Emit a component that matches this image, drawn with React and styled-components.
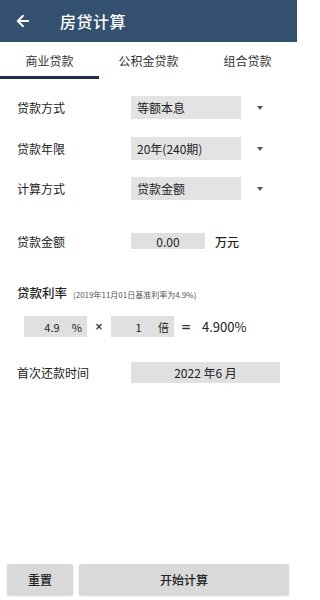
import React from "react";
import styled, { createGlobalStyle } from "styled-components";

const Global = createGlobalStyle`
  html, body { margin: 0; padding: 0; background: #fff; }
  body { font-family: "Noto Sans CJK SC", "Noto Sans", sans-serif; color: #222; }
  * { box-sizing: border-box; }
`;

const Page = styled.div`
  width: 297px;
  height: 600px;
  display: flex;
  flex-direction: column;
  background: #fff;
`;

const Header = styled.div`
  height: 42px;
  background: #34506f;
  display: flex;
  align-items: center;
  padding-left: 14px;
  color: #fff;
`;

const BackIcon = styled.svg`
  width: 18px;
  height: 18px;
  flex: none;
`;

const Title = styled.div`
  margin-left: 28px;
  font-size: 16px;
  font-weight: 500;
  letter-spacing: 0.5px;
`;

const Tabs = styled.div`
  height: 38px;
  display: grid;
  grid-template-columns: repeat(3, 1fr);
`;

const Tab = styled.div`
  display: flex;
  align-items: center;
  justify-content: center;
  font-size: 12px;
  color: #333;
  position: relative;
  padding-bottom: 2px;
  &::after {
    content: "";
    display: ${(p) => (p.$active ? "block" : "none")};
    position: absolute;
    left: 0;
    right: 0;
    bottom: 1px;
    height: 3px;
    background: #1f2b48;
  }
`;

const Form = styled.div`
  display: flex;
  flex-direction: column;
  padding: 0 17px;
`;

const Row = styled.div`
  display: flex;
  align-items: center;
  margin-top: ${(p) => p.$mt}px;
  height: ${(p) => p.$h || 23}px;
`;

const Label = styled.div`
  width: 114px;
  flex: none;
  font-size: 12px;
  color: #222;
`;

const SelectBox = styled.div`
  width: 110px;
  height: 23px;
  background: #e3e3e3;
  display: flex;
  align-items: center;
  padding-left: 6px;
  font-size: 12px;
  color: #222;
`;

const Caret = styled.div`
  margin-left: 16px;
  width: 0;
  height: 0;
  border-left: 3.5px solid transparent;
  border-right: 3.5px solid transparent;
  border-top: 4px solid #555;
`;

const InputBox = styled.div`
  width: ${(p) => p.$w}px;
  height: ${(p) => p.$h}px;
  background: #e0e0e0;
  display: flex;
  align-items: center;
  justify-content: center;
  font-size: 12px;
  color: #222;
`;

const Unit = styled.div`
  margin-left: 10px;
  font-size: 12px;
  font-weight: 500;
  color: #222;
`;

const RateLabel = styled.div`
  display: flex;
  align-items: baseline;
  font-size: 12.5px;
  font-weight: 500;
  color: #222;
`;

const Note = styled.span`
  margin-left: 6px;
  font-size: 8px;
  font-weight: 400;
  color: #555;
`;

const RateRow = styled.div`
  display: flex;
  align-items: center;
  margin-top: 15px;
  padding-left: 7px;
  height: 21px;
`;

const RateBox = styled.div`
  width: 63px;
  height: 21px;
  background: #e0e0e0;
  display: flex;
  align-items: center;
  font-size: 11px;
  color: #222;
  padding-right: 5px;
`;

const RateValue = styled.span`
  flex: 1;
  text-align: center;
  padding-left: 8px;
`;

const Op = styled.div`
  width: 24px;
  text-align: center;
  font-family: "DejaVu Sans", sans-serif;
  font-size: ${(p) => p.$size || 10}px;
  font-weight: bold;
  color: #333;
`;

const Result = styled.div`
  margin-left: 4px;
  font-size: 13px;
  color: #222;
`;

const Footer = styled.div`
  margin-top: auto;
  display: flex;
  gap: 6px;
  padding: 0 8px 5px 7px;
`;

const Button = styled.button`
  height: 31px;
  width: ${(p) => (p.$w ? `${p.$w}px` : "auto")};
  flex: ${(p) => (p.$w ? "none" : "1")};
  border: none;
  border-radius: 2px;
  background: #d9d9d9;
  box-shadow: 0 1px 2px rgba(0, 0, 0, 0.18);
  font-family: inherit;
  font-size: 12px;
  font-weight: 500;
  color: #222;
`;

export default function App() {
  return (
    <Page>
      <Global />
      <Header>
        <BackIcon viewBox="0 0 24 24" fill="none" stroke="#fff" strokeWidth="2.4" strokeLinecap="round" strokeLinejoin="round">
          <path d="M19 12H5" />
          <path d="M12 19l-7-7 7-7" />
        </BackIcon>
        <Title>房贷计算</Title>
      </Header>
      <Tabs>
        <Tab $active>商业贷款</Tab>
        <Tab>公积金贷款</Tab>
        <Tab>组合贷款</Tab>
      </Tabs>
      <Form>
        <Row $mt={16}>
          <Label>贷款方式</Label>
          <SelectBox>等额本息</SelectBox>
          <Caret />
        </Row>
        <Row $mt={18}>
          <Label>贷款年限</Label>
          <SelectBox>20年(240期)</SelectBox>
          <Caret />
        </Row>
        <Row $mt={17}>
          <Label>计算方式</Label>
          <SelectBox>贷款金额</SelectBox>
          <Caret />
        </Row>
        <Row $mt={33} $h={16}>
          <Label>贷款金额</Label>
          <InputBox $w={74} $h={16}>0.00</InputBox>
          <Unit>万元</Unit>
        </Row>
        <Row $mt={34} $h={18}>
          <RateLabel>
            贷款利率<Note>(2019年11月01日基准利率为4.9%)</Note>
          </RateLabel>
        </Row>
        <RateRow>
          <RateBox>
            <RateValue>4.9</RateValue>%
          </RateBox>
          <Op>×</Op>
          <RateBox>
            <RateValue>1</RateValue>倍
          </RateBox>
          <Op $size={12}>=</Op>
          <Result>4.900%</Result>
        </RateRow>
        <Row $mt={25} $h={21}>
          <Label>首次还款时间</Label>
          <InputBox $w={149} $h={21}>2022 年6 月</InputBox>
        </Row>
      </Form>
      <Footer>
        <Button $w={66}>重置</Button>
        <Button>开始计算</Button>
      </Footer>
    </Page>
  );
}
